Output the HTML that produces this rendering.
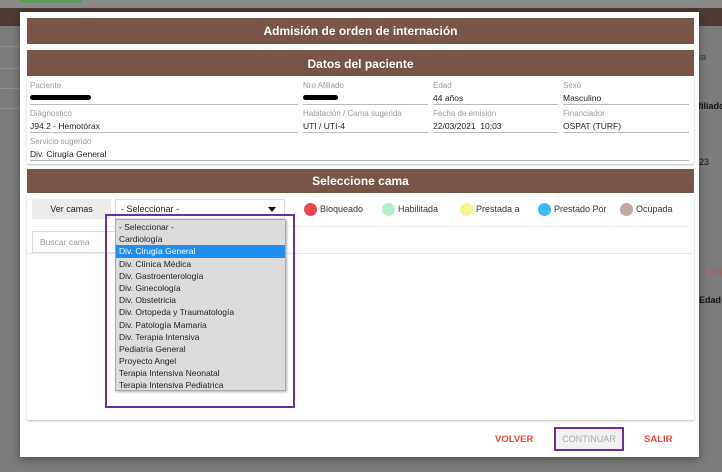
<!DOCTYPE html>
<html><head><meta charset="utf-8"><style>
*{margin:0;padding:0;box-sizing:border-box}
body{width:722px;height:472px;overflow:hidden;background:#7d7d7d;font-family:"Liberation Sans",sans-serif;position:relative}
.a{position:absolute}
.bar{background:#795548;color:#fff;font-weight:bold;font-size:12px;text-align:center}
.lbl{font-size:8px;color:#9a9a9a}
.val{font-size:8.5px;color:#222}
.ln{height:1px;background:#bbb}
.opt{font-size:8.5px;color:#222;height:12.2px;line-height:12px;padding-left:3px;white-space:nowrap}
.dot{width:13px;height:13px;border-radius:50%}
.lg{font-size:9px;color:#333}
</style></head><body>
<div class="a" style="left:0;top:0;width:722px;height:13px;background:#8a8a8a"></div>
<div class="a" style="left:20px;top:0;width:62px;height:3px;background:#5c9a5c"></div>
<div class="a" style="left:0;top:8px;width:722px;height:18px;background:#4e3a33"></div>
<div class="a" style="left:0;top:26px;width:722px;height:446px;background:#7c7c7c"></div>
<div class="a" style="left:0;top:46px;width:20px;height:1px;background:#8e8e8e"></div>
<div class="a" style="left:0;top:68px;width:20px;height:1px;background:#8e8e8e"></div>
<div class="a" style="left:0;top:88px;width:20px;height:1px;background:#8e8e8e"></div>
<div class="a" style="left:0;top:108px;width:20px;height:1px;background:#8e8e8e"></div>
<div class="a" style="left:699px;top:52px;font-size:9px;color:#333">ia</div>
<div class="a" style="left:698px;top:101px;font-size:9px;font-weight:bold;color:#111">filiado</div>
<div class="a" style="left:699px;top:157px;font-size:9px;color:#111">23</div>
<div class="a" style="left:709px;top:267px;font-size:9px;color:#b55">LIN</div>
<div class="a" style="left:699px;top:295px;font-size:9px;font-weight:bold;color:#111">Edad</div>
<!-- modal -->
<div class="a" style="left:20px;top:12px;width:679px;height:445px;background:#fff;box-shadow:0 2px 8px rgba(0,0,0,.4)"></div>
<div class="a bar" style="left:27px;top:18px;width:667px;height:26px;line-height:26px">Admisión de orden de internación</div>
<div class="a bar" style="left:27px;top:50px;width:667px;height:26px;line-height:28px">Datos del paciente</div>
<div class="a" style="left:27px;top:76px;width:667px;height:88px;box-shadow:0 1px 2px rgba(0,0,0,.25)"></div>
<div class="a lbl" style="left:30px;top:81px">Paciente</div>
<div class="a" style="left:30px;top:95px;width:61px;height:5px;background:#000;border-radius:3px"></div>
<div class="a ln" style="left:30px;top:104px;width:268px"></div>
<div class="a lbl" style="left:303px;top:81px">Nro Afiliado</div>
<div class="a" style="left:303px;top:95px;width:35px;height:5px;background:#000;border-radius:3px"></div>
<div class="a ln" style="left:303px;top:104px;width:125px"></div>
<div class="a lbl" style="left:433px;top:81px">Edad</div>
<div class="a val" style="left:433px;top:93px">44 años</div>
<div class="a ln" style="left:433px;top:104px;width:125px"></div>
<div class="a lbl" style="left:563px;top:81px">Sexo</div>
<div class="a val" style="left:563px;top:93px">Masculino</div>
<div class="a ln" style="left:563px;top:104px;width:126px"></div>
<div class="a lbl" style="left:30px;top:109px">Diágnostico</div>
<div class="a val" style="left:30px;top:121px">J94.2 - Hemotórax</div>
<div class="a ln" style="left:30px;top:132px;width:268px"></div>
<div class="a lbl" style="left:303px;top:109px">Habitación / Cama sugerida</div>
<div class="a val" style="left:303px;top:121px">UTI / UTI-4</div>
<div class="a ln" style="left:303px;top:132px;width:125px"></div>
<div class="a lbl" style="left:433px;top:109px">Fecha de emisión</div>
<div class="a val" style="left:433px;top:121px">22/03/2021&nbsp; 10:03</div>
<div class="a ln" style="left:433px;top:132px;width:125px"></div>
<div class="a lbl" style="left:563px;top:109px">Financiador</div>
<div class="a val" style="left:563px;top:121px">OSPAT (TURF)</div>
<div class="a ln" style="left:563px;top:132px;width:126px"></div>
<div class="a lbl" style="left:30px;top:137px">Servicio sugerido</div>
<div class="a val" style="left:30px;top:149px">Div. Cirugía General</div>
<div class="a ln" style="left:30px;top:160px;width:659px"></div>
<div class="a bar" style="left:27px;top:169px;width:667px;height:24px;line-height:24px">Seleccione cama</div>
<div class="a" style="left:27px;top:193px;width:667px;height:227px;box-shadow:0 1px 2px rgba(0,0,0,.25)"></div>
<div class="a" style="left:32px;top:199px;width:79px;height:20px;background:#ececec;font-size:9px;text-align:center;line-height:20px;color:#222">Ver camas</div>
<div class="a" style="left:115px;top:199px;width:170px;height:20px;border:1px solid #ddd;font-size:9px;line-height:18px;padding-left:5px;color:#222">- Seleccionar -</div>
<div class="a" style="left:268px;top:207px;width:0;height:0;border-left:4px solid transparent;border-right:4px solid transparent;border-top:5px solid #111"></div>
<div class="a dot" style="left:304px;top:203px;background:#f0474f"></div><div class="a lg" style="left:320px;top:204px">Bloqueado</div>
<div class="a dot" style="left:382px;top:203px;background:#b4efc7"></div><div class="a lg" style="left:398px;top:204px">Habilitada</div>
<div class="a dot" style="left:460px;top:203px;background:#f8f58a"></div><div class="a lg" style="left:476px;top:204px">Prestada a</div>
<div class="a dot" style="left:538px;top:203px;background:#3bbcf5"></div><div class="a lg" style="left:554px;top:204px">Prestado Por</div>
<div class="a dot" style="left:620px;top:203px;background:#bfa9a1"></div><div class="a lg" style="left:636px;top:204px">Ocupada</div>
<div class="a" style="left:32px;top:226px;width:656px;height:1px;background:#eee"></div>
<div class="a" style="left:32px;top:231px;width:90px;height:22px;border:1px solid #ddd;font-size:8.5px;color:#999;line-height:20px;padding-left:7px">Buscar cama</div>
<div class="a" style="left:27px;top:253px;width:667px;height:1px;background:#e6e6e6"></div>
<!-- dropdown -->
<div class="a" style="left:115px;top:219px;width:171px;height:172px;background:#dcdcdc;border:1px solid #aaa;box-shadow:1px 1px 2px rgba(0,0,0,.3);padding-top:1px">
<div class="opt">- Seleccionar -</div>
<div class="opt">Cardiología</div>
<div class="opt" style="background:#1e8ef0;color:#fff">Div. Cirugía General</div>
<div class="opt">Div. Clínica Médica</div>
<div class="opt">Div. Gastroenterología</div>
<div class="opt">Div. Ginecología</div>
<div class="opt">Div. Obstetricia</div>
<div class="opt">Div. Ortopeda y Traumatología</div>
<div class="opt">Div. Patología Mamaria</div>
<div class="opt">Div. Terapia Intensiva</div>
<div class="opt">Pediatría General</div>
<div class="opt">Proyecto Angel</div>
<div class="opt">Terapia Intensiva Neonatal</div>
<div class="opt">Terapia Intensiva Pediatrica</div>
</div>
<div class="a" style="left:105px;top:214px;width:190px;height:194px;border:2px solid #6a2fa0"></div>
<!-- footer -->
<div class="a" style="left:495px;top:434px;font-size:9.5px;font-weight:bold;color:#f0473c">VOLVER</div>
<div class="a" style="left:554px;top:427px;width:70px;height:24px;border:2px solid #6a2fa0;background:#f1f1f1;font-size:9px;color:#aaa;text-align:center;line-height:20px">CONTINUAR</div>
<div class="a" style="left:644px;top:434px;font-size:9.5px;font-weight:bold;color:#f0473c">SALIR</div>
</body></html>
